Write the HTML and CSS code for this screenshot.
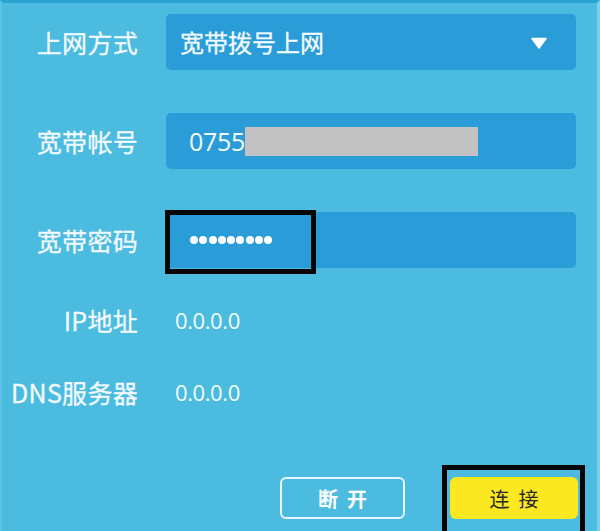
FILE: index.html
```html
<!DOCTYPE html>
<html lang="zh-CN">
<head>
<meta charset="utf-8">
<link rel="stylesheet" href="styles.css">
</head>
<body>
<div class="frame">
  <div class="form">
    <div class="row">
      <div class="label">上网方式</div>
      <div class="field select">
        <span class="field-text">宽带拨号上网</span>
        <svg class="caret" width="16" height="12" viewBox="0 0 16 12"><path d="M1 1.5 H15 L8 11 Z" fill="#ffffff" stroke="#ffffff" stroke-width="1.5" stroke-linejoin="round"/></svg>
      </div>
    </div>
    <div class="row">
      <div class="label">宽带帐号</div>
      <div class="field input">
        <span class="num">0755</span><span class="mask"></span>
      </div>
    </div>
    <div class="row">
      <div class="label">宽带密码</div>
      <div class="field input pwd">
        <span class="dots"><i></i><i></i><i></i><i></i><i></i><i></i><i></i><i></i><i></i></span>
        <div class="highlight hl-pwd"></div>
      </div>
    </div>
    <div class="info ip">
      <div class="label">IP地址</div>
      <div class="value">0.0.0.0</div>
    </div>
    <div class="info dns">
      <div class="label">DNS服务器</div>
      <div class="value">0.0.0.0</div>
    </div>
    <div class="actions">
      <button class="btn btn-outline">断开</button>
      <div class="btn-wrap">
        <button class="btn btn-primary">连接</button>
        <div class="highlight hl-btn"></div>
      </div>
    </div>
  </div>
</div>
</body>
</html>
```

FILE: styles.css
```css
html, body {
  margin: 0;
  padding: 0;
  background: #4bbbe0;
}

.frame {
  position: relative;
  width: 600px;
  height: 531px;
  box-sizing: border-box;
  background: #4bbbe0;
  border-top: 3px solid #2ba4d2;
  border-left: 2px solid #5cc3e6;
  border-right: 3px solid #7ccfee;
  overflow: hidden;
  font-family: "Noto Sans CJK SC", "Noto Sans", sans-serif;
  color: #f2faff;
}

.form {
  display: flex;
  flex-direction: column;
  padding-top: 11px;
}

.row {
  display: flex;
  align-items: center;
  height: 56px;
  margin-bottom: 43px;
}

.label {
  width: 136px;
  flex: none;
  text-align: right;
  font-size: 25px;
  line-height: 30px;
  white-space: nowrap;
  letter-spacing: 0.3px;
  -webkit-text-stroke: 0.3px #f2faff;
}

.field {
  position: relative;
  margin-left: 28px;
  width: 410px;
  height: 56px;
  box-sizing: border-box;
  background: #2a9dd8;
  border-radius: 5px;
  display: flex;
  align-items: center;
}

.select {
  padding-left: 14px;
  padding-right: 29px;
  justify-content: space-between;
}

.field-text {
  font-size: 24px;
  line-height: 30px;
  color: #f4fbff;
  -webkit-text-stroke: 0.3px #f4fbff;
}

.caret {
  display: block;
  margin-top: 2px;
}

.input {
  padding-left: 23px;
}

.num {
  font-family: "Open Sans", "Noto Sans", sans-serif;
  font-size: 25px;
  line-height: 30px;
  color: #f4fbff;
  letter-spacing: -0.3px;
}

.mask {
  display: inline-block;
  width: 233px;
  height: 29px;
  background: #c2c2c2;
}

.pwd {
  padding-left: 24px;
}

.dots {
  display: flex;
  gap: 1.3px;
}

.dots i {
  display: block;
  width: 8px;
  height: 8px;
  border-radius: 50%;
  background: #ffffff;
}

.highlight {
  position: absolute;
  box-sizing: border-box;
  border: 5px solid #050505;
}

.hl-pwd {
  left: -1px;
  top: -2px;
  width: 151px;
  height: 64px;
}

.info {
  display: flex;
  align-items: center;
  height: 30px;
}

.ip {
  margin-top: -6px;
}

.dns {
  margin-top: 42px;
}

.value {
  margin-left: 37px;
  font-family: "Open Sans", "Noto Sans", sans-serif;
  font-size: 22px;
  line-height: 30px;
  color: #f4fbff;
  letter-spacing: -0.4px;
}

.actions {
  display: flex;
  justify-content: flex-end;
  align-items: center;
  gap: 45px;
  margin-top: 70px;
  padding-right: 19px;
}

.btn {
  height: 42px;
  box-sizing: border-box;
  border-radius: 6px;
  font-family: "Noto Sans CJK SC", sans-serif;
  font-size: 20px;
  letter-spacing: 9px;
  text-indent: 9px;
  padding: 0;
}

.btn-outline {
  width: 125px;
  background: transparent;
  border: 2px solid #e8f7ff;
  color: #ffffff;
  font-weight: bold;
}

.btn-wrap {
  position: relative;
}

.btn-primary {
  display: block;
  width: 128px;
  background: #fce820;
  border: none;
  color: #2a2a2a;
}

.hl-btn {
  left: -8px;
  top: -12px;
  width: 143px;
  height: 80px;
}
```
